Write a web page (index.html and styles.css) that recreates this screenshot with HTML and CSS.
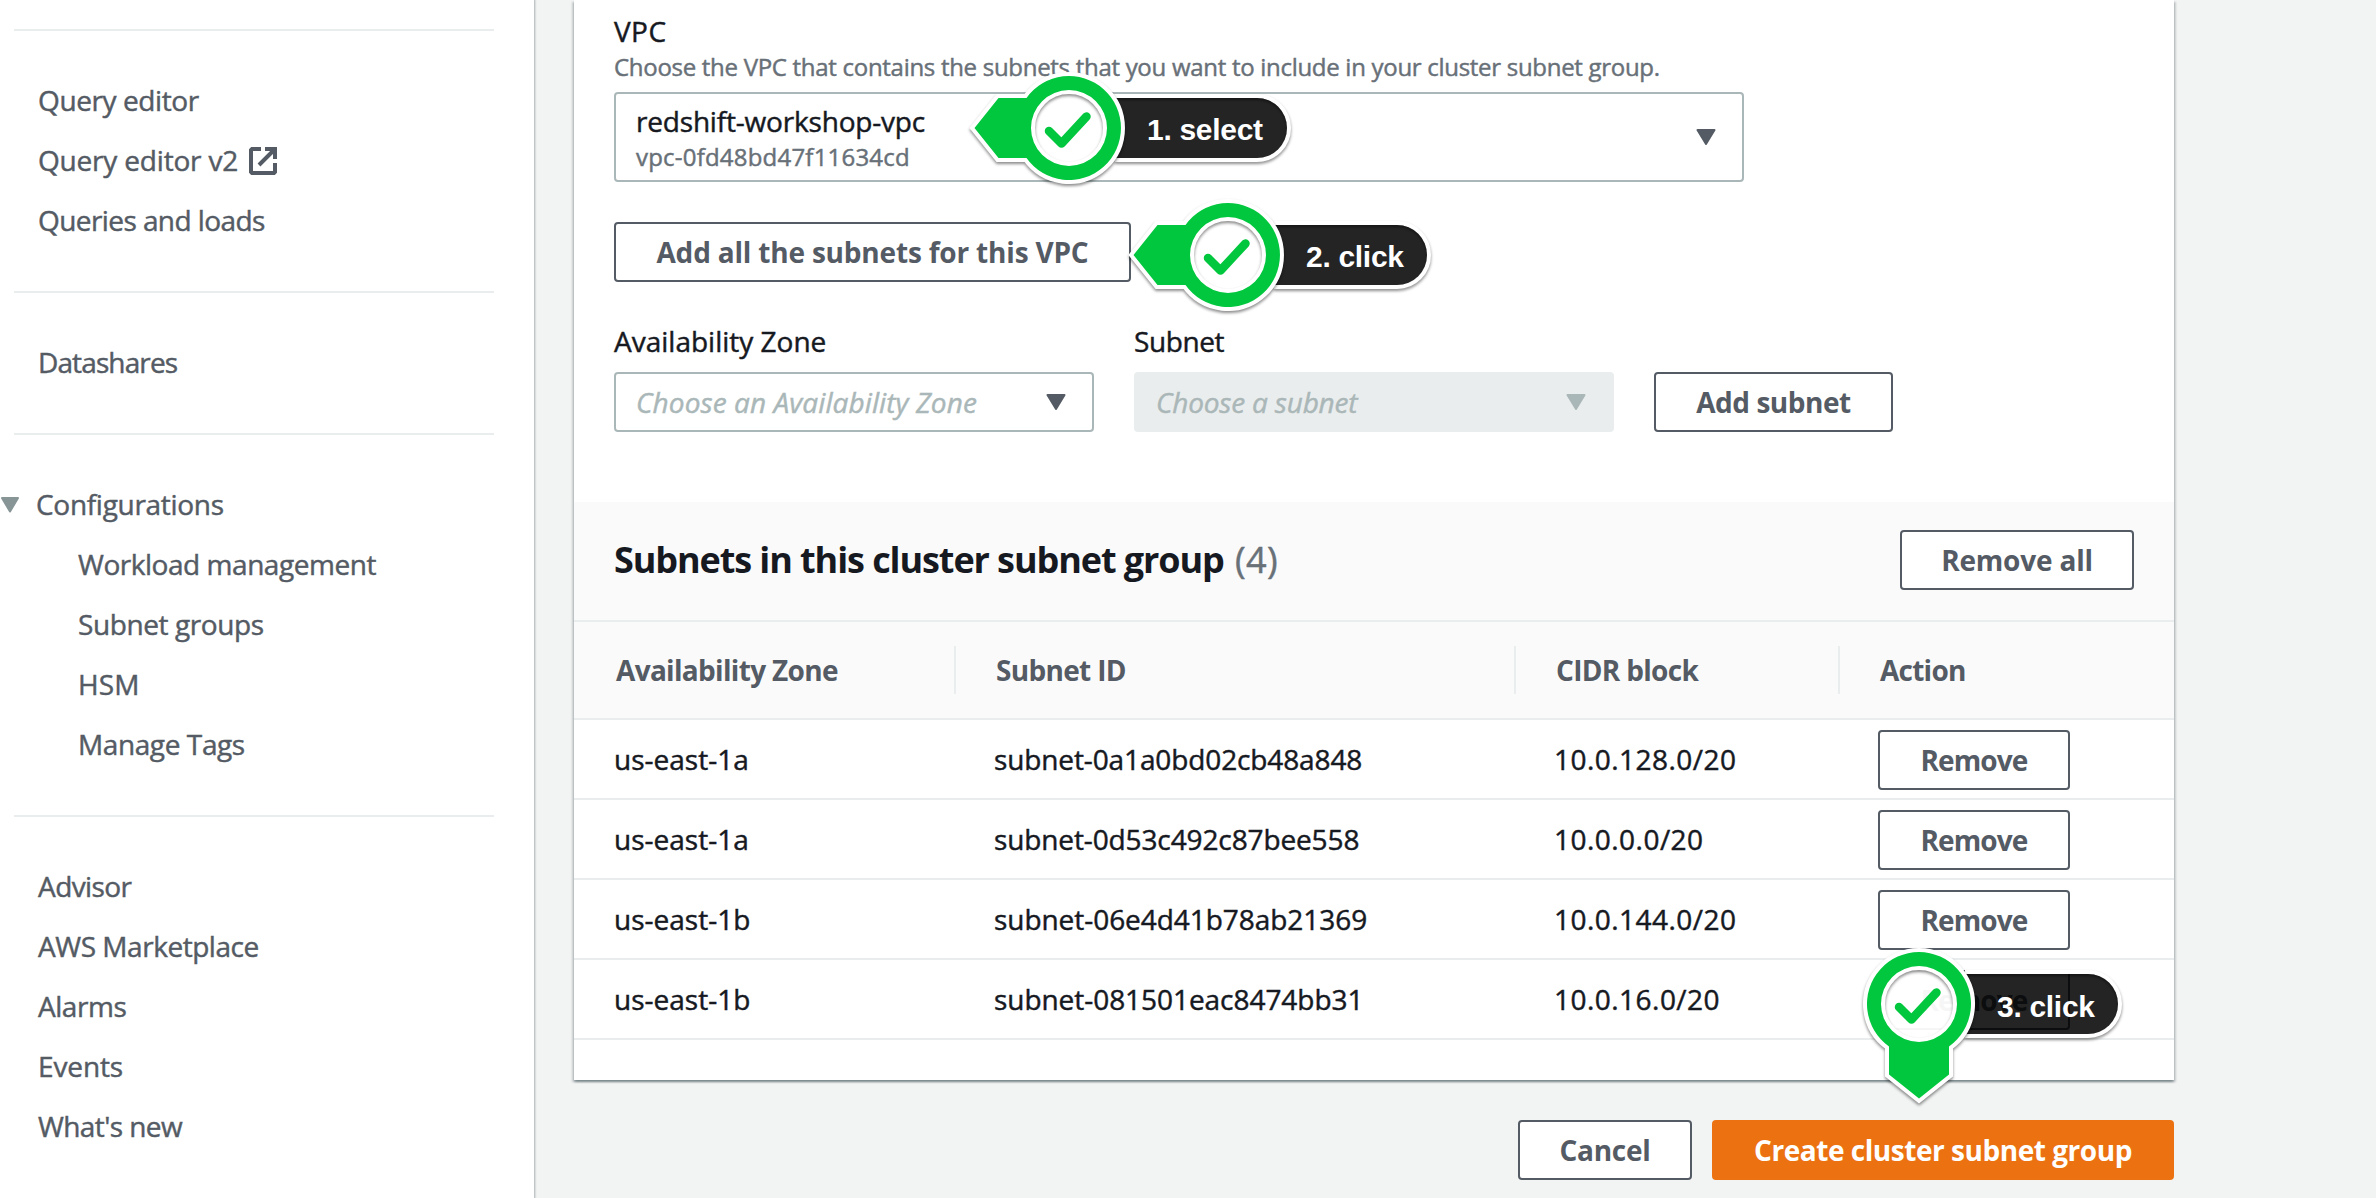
FILE: index.html
```html
<!DOCTYPE html>
<html lang="en">
<head>
<meta charset="utf-8">
<title>Create cluster subnet group</title>
<link rel="stylesheet" href="styles.css">
</head>
<body>
<div class="layout">
  <nav class="sidebar">
    <ul class="nav-group">
      <li class="ls-n4">Query editor</li>
      <li><span class="ls-n2">Query editor v2</span><svg class="external" width="28" height="28" viewBox="0 0 28 28"><path d="M12 2H3L2 3V25L3 26H25L26 25V16M16 2H26V12M10 18L25 3" fill="none" stroke="currentColor" stroke-width="4"/></svg></li>
      <li class="ls-n6">Queries and loads</li>
    </ul>
    <ul class="nav-group">
      <li class="ls-n9">Datashares</li>
    </ul>
    <div class="nav-group">
      <div class="section-title"><svg class="caret" width="20" height="16" viewBox="0 0 20 16"><path d="M2 1H18L10 14.500Z" fill="currentColor" stroke="currentColor" stroke-width="2" stroke-linejoin="round"/></svg><span class="ls-n3">Configurations</span></div>
      <ul class="nested">
        <li class="ls-n5">Workload management</li>
        <li class="ls-n4">Subnet groups</li>
        <li class="ls-p1">HSM</li>
        <li class="ls-n4">Manage Tags</li>
      </ul>
    </div>
    <ul class="nav-group">
      <li class="ls-n6">Advisor</li>
      <li class="ls-n5">AWS Marketplace</li>
      <li class="ls-n5">Alarms</li>
      <li class="ls-n1">Events</li>
      <li class="ls-n6">What's new</li>
    </ul>
  </nav>

  <main class="content">
    <section class="card">
      <div class="form">
        <label class="label ls-p4">VPC</label>
        <p class="hint">Choose the VPC that contains the subnets that you want to include in your cluster subnet group.</p>
        <div class="select vpc-select">
          <div class="option">
            <span class="option-name ls-n2">redshift-workshop-vpc</span>
            <span class="option-id ls-p2">vpc-0fd48bd47f11634cd</span>
          </div>
          <svg class="arrow" width="20" height="16" viewBox="0 0 20 16"><path d="M1.500 1H18.500L10 15Z"/></svg>
        </div>
        <button class="btn add-all ls-n2">Add all the subnets for this VPC</button>
        <div class="fields">
          <div class="field">
            <label class="label">Availability Zone</label>
            <div class="select"><span class="placeholder ls-p1">Choose an Availability Zone</span><svg class="arrow" width="20" height="16" viewBox="0 0 20 16"><path d="M1.500 1H18.500L10 15Z"/></svg></div>
          </div>
          <div class="field">
            <label class="label ls-n4">Subnet</label>
            <div class="select disabled"><span class="placeholder ls-n2">Choose a subnet</span><svg class="arrow" width="20" height="16" viewBox="0 0 20 16"><path d="M1.500 1H18.500L10 15Z"/></svg></div>
          </div>
          <button class="btn add-subnet ls-n5">Add subnet</button>
        </div>
      </div>

      <header class="table-title">
        <h2>Subnets in this cluster subnet group <span class="count">(4)</span></h2>
        <button class="btn remove-all ls-n2">Remove all</button>
      </header>

      <div class="row head">
        <div class="ls-n7">Availability Zone</div>
        <div class="ls-n7">Subnet ID</div>
        <div class="ls-n7">CIDR block</div>
        <div class="ls-n8">Action</div>
      </div>
      <div class="row">
        <div>us-east-1a</div><div class="ls-n1">subnet-0a1a0bd02cb48a848</div><div class="ls-p5">10.0.128.0/20</div><div><button class="btn remove ls-n9">Remove</button></div>
      </div>
      <div class="row">
        <div>us-east-1a</div><div class="ls-n1">subnet-0d53c492c87bee558</div><div class="ls-p5">10.0.0.0/20</div><div><button class="btn remove ls-n9">Remove</button></div>
      </div>
      <div class="row">
        <div>us-east-1b</div><div class="ls-n05">subnet-06e4d41b78ab21369</div><div class="ls-p5">10.0.144.0/20</div><div><button class="btn remove ls-n9">Remove</button></div>
      </div>
      <div class="row">
        <div>us-east-1b</div><div class="ls-n05">subnet-081501eac8474bb31</div><div class="ls-p5">10.0.16.0/20</div><div><button class="btn remove ls-n9">Remove</button></div>
      </div>
    </section>

    <footer class="actions">
      <button class="btn cancel ls-n3">Cancel</button>
      <button class="btn primary ls-n5">Create cluster subnet group</button>
    </footer>
  </main>
</div>

<svg class="pin pin-select" width="340" height="220" viewBox="-110 -110 340 220">
  <path class="pill-edge" d="M46 -32H188A32 32 0 0 1 188 32H46"/>
  <path class="pill" d="M46 -30H188A30 30 0 0 1 188 30H46Z"/>
  <circle class="dial" r="36"/>
  <g class="marker"><path d="M-42.500 -30H-70.500L-94.500 0L-70.500 30H-42.500A52 52 0 1 0 -42.500 -30ZM0 -38A38 38 0 1 1 0 38A38 38 0 1 1 0 -38Z"/></g>
  <path class="tick" d="M-20 3L-7.500 15.500L17.500 -11.500"/>
  <text x="78" y="12">1. select</text>
</svg>
<svg class="pin pin-add" width="340" height="220" viewBox="-110 -110 340 220">
  <path class="pill-edge" d="M46 -32H169A32 32 0 0 1 169 32H46"/>
  <path class="pill" d="M46 -30H169A30 30 0 0 1 169 30H46Z"/>
  <circle class="dial" r="36"/>
  <g class="marker"><path d="M-42.500 -30H-70.500L-94.500 0L-70.500 30H-42.500A52 52 0 1 0 -42.500 -30ZM0 -38A38 38 0 1 1 0 38A38 38 0 1 1 0 -38Z"/></g>
  <path class="tick" d="M-20 3L-7.500 15.500L17.500 -11.500"/>
  <text x="78" y="12">2. click</text>
</svg>
<svg class="pin pin-create" width="340" height="220" viewBox="-110 -110 340 220">
  <path class="pill-edge" d="M46 -32H169A32 32 0 0 1 169 32H46"/>
  <path class="pill" d="M46 -30H169A30 30 0 0 1 169 30H46Z"/>
  <circle class="dial" r="36"/>
  <g class="marker"><path transform="rotate(-90)" d="M-42.500 -30H-70.500L-94.500 0L-70.500 30H-42.500A52 52 0 1 0 -42.500 -30ZM0 -38A38 38 0 1 1 0 38A38 38 0 1 1 0 -38Z"/></g>
  <path class="tick" d="M-20 3L-7.500 15.500L17.500 -11.500"/>
  <text x="78" y="13">3. click</text>
</svg>
</body>
</html>
```
FILE: styles.css
```css
* { box-sizing: border-box; }

body {
  margin: 0;
  position: relative;
  height: 1198px;
  overflow: hidden;
  background: #f2f3f3;
  color: #16191f;
  font: 28px/40px "Open Sans", "Noto Sans", sans-serif;
  -webkit-text-stroke: 0.45px currentColor;
}

ul, p, h2 { margin: 0; padding: 0; list-style: none; }

.layout { display: flex; height: 1198px; }

/* Letter-spacing steps, in tenths of a pixel */
.ls-n9 { letter-spacing: -0.88px; }
.ls-n8 { letter-spacing: -0.75px; }
.ls-n7 { letter-spacing: -0.68px; }
.ls-n6 { letter-spacing: -0.58px; }
.ls-n5 { letter-spacing: -0.46px; }
.ls-n4 { letter-spacing: -0.4px; }
.ls-n3 { letter-spacing: -0.3px; }
.ls-n2 { letter-spacing: -0.19px; }
.ls-n1 { letter-spacing: -0.12px; }
.ls-n05 { letter-spacing: -0.05px; }
.ls-p1 { letter-spacing: 0.09px; }
.ls-p2 { letter-spacing: 0.21px; }
.ls-p4 { letter-spacing: 0.43px; }
.ls-p5 { letter-spacing: 0.47px; }

/* Sidebar */
.sidebar {
  flex: none;
  width: 534px;
  padding: 29px 40px 0 14px;
  background: #fff;
  color: #545b64;
  line-height: 60px;
  box-shadow: 0 0 2px 1px rgba(0, 28, 36, 0.3);
}
.nav-group { border-top: 2px solid #eaeded; padding: 39px 0 41px 24px; white-space: nowrap; }
.nav-group li, .section-title { display: flex; align-items: center; height: 60px; }
.external { margin-left: 11px; margin-top: 2px; }
.section-title { margin-left: -38px; gap: 16px; }
.caret { color: #879596; margin-top: 1px; }
.nested { padding-left: 40px; }

/* Main column */
.content { width: 1600px; margin-left: 40px; }
.card {
  background: #fff;
  padding-bottom: 40px;
  box-shadow: 0 2px 2px 0 rgba(0, 28, 36, 0.3), 2px 2px 2px 0 rgba(0, 28, 36, 0.15), -2px 2px 2px 0 rgba(0, 28, 36, 0.15);
}
.form { padding: 11px 40px 70px; }
.label { display: block; height: 40px; }
.hint { height: 32px; color: #687078; font-size: 24px; line-height: 32px; letter-spacing: -0.29px; white-space: nowrap; }

.select {
  display: flex;
  align-items: center;
  justify-content: space-between;
  width: 480px;
  height: 60px;
  padding: 0 26px 0 20px;
  border: 2px solid #aab7b8;
  border-radius: 4px;
  background: #fff;
}
.select .arrow { color: #545b64; }
.arrow path { fill: currentColor; stroke: currentColor; stroke-width: 2; stroke-linejoin: round; }
.vpc-select { width: 1130px; height: 90px; margin: 9px 0 40px; }
.option { display: flex; flex-direction: column; line-height: 36px; padding-top: 3px; }
.option-id { color: #687078; font-size: 24px; line-height: 35px; }
.placeholder { color: #aab7b8; font-style: italic; padding-bottom: 1px; }
.disabled { background: #eaeded; border-color: #eaeded; }
.select.disabled .arrow { color: #aab7b8; }

.fields { display: flex; align-items: flex-end; gap: 40px; margin-top: 39px; }
.field .label { margin-bottom: 11px; }

.btn {
  display: flex;
  align-items: center;
  justify-content: center;
  height: 60px;
  padding: 0;
  border: 2px solid #545b64;
  border-radius: 4px;
  background: #fff;
  color: #545b64;
  font: inherit;
  font-weight: 700;
  white-space: nowrap;
  -webkit-text-stroke: 0;
}
.add-all { width: 517px; }
.add-subnet { width: 239px; }
.remove-all { width: 234px; }
.remove { width: 192px; }
.cancel { width: 174px; }
.primary { width: 462px; background: #ec7211; border-color: #ec7211; color: #fff; }

/* Subnet table */
.table-title {
  display: flex;
  align-items: center;
  justify-content: space-between;
  height: 120px;
  padding: 0 40px 2px;
  background: #fafafa;
  border-bottom: 2px solid #eaeded;
}
.table-title h2 { font-size: 36px; letter-spacing: -1.09px; -webkit-text-stroke: 0; }
.count { color: #687078; font-weight: 400; letter-spacing: 0.5px; margin-left: 3px; -webkit-text-stroke: 0.45px currentColor; }

.row {
  display: grid;
  grid-template-columns: 382px 560px 324px 1fr;
  align-items: center;
  height: 80px;
  border-bottom: 2px solid #eaeded;
}
.row > div { padding-left: 38px; }
.row > div:first-child { padding-left: 40px; }
.row .remove { margin-top: 2px; }
.head { height: 98px; background: #fafafa; color: #545b64; font-weight: 700; -webkit-text-stroke: 0; }
.head > div { height: 48px; line-height: 48px; padding-left: 40px; }
.head > div:first-child { padding-left: 42px; }
.head > div:not(:last-child) { border-right: 2px solid #eaeded; }

.actions { display: flex; justify-content: flex-end; gap: 20px; margin-top: 40px; }

/* Step pins laid over the form */
.pin { position: absolute; }
.pin-select { left: 959px; top: 17.5px; }
.pin-add { left: 1118px; top: 145px; }
.pin-create { left: 1809px; top: 894px; }
.pill { fill: rgba(0, 0, 0, 0.86); }
.pill-edge { fill: none; stroke: #fff; stroke-width: 4; filter: drop-shadow(0 2px 1.500px rgba(0, 0, 0, 0.45)); }
.dial { fill: rgba(255, 255, 255, 0.95); }
.marker { filter: drop-shadow(0 2px 1.500px rgba(0, 0, 0, 0.45)); }
.marker path { fill: #00c73d; fill-rule: evenodd; stroke: #fff; stroke-width: 8; paint-order: stroke; }
.tick { fill: none; stroke: #00c73d; stroke-width: 8.500; stroke-linecap: round; stroke-linejoin: round; }
.pin text { fill: #fff; font: 700 30px "Liberation Sans", Arial, sans-serif; letter-spacing: -0.3px; -webkit-text-stroke: 0; }
```
